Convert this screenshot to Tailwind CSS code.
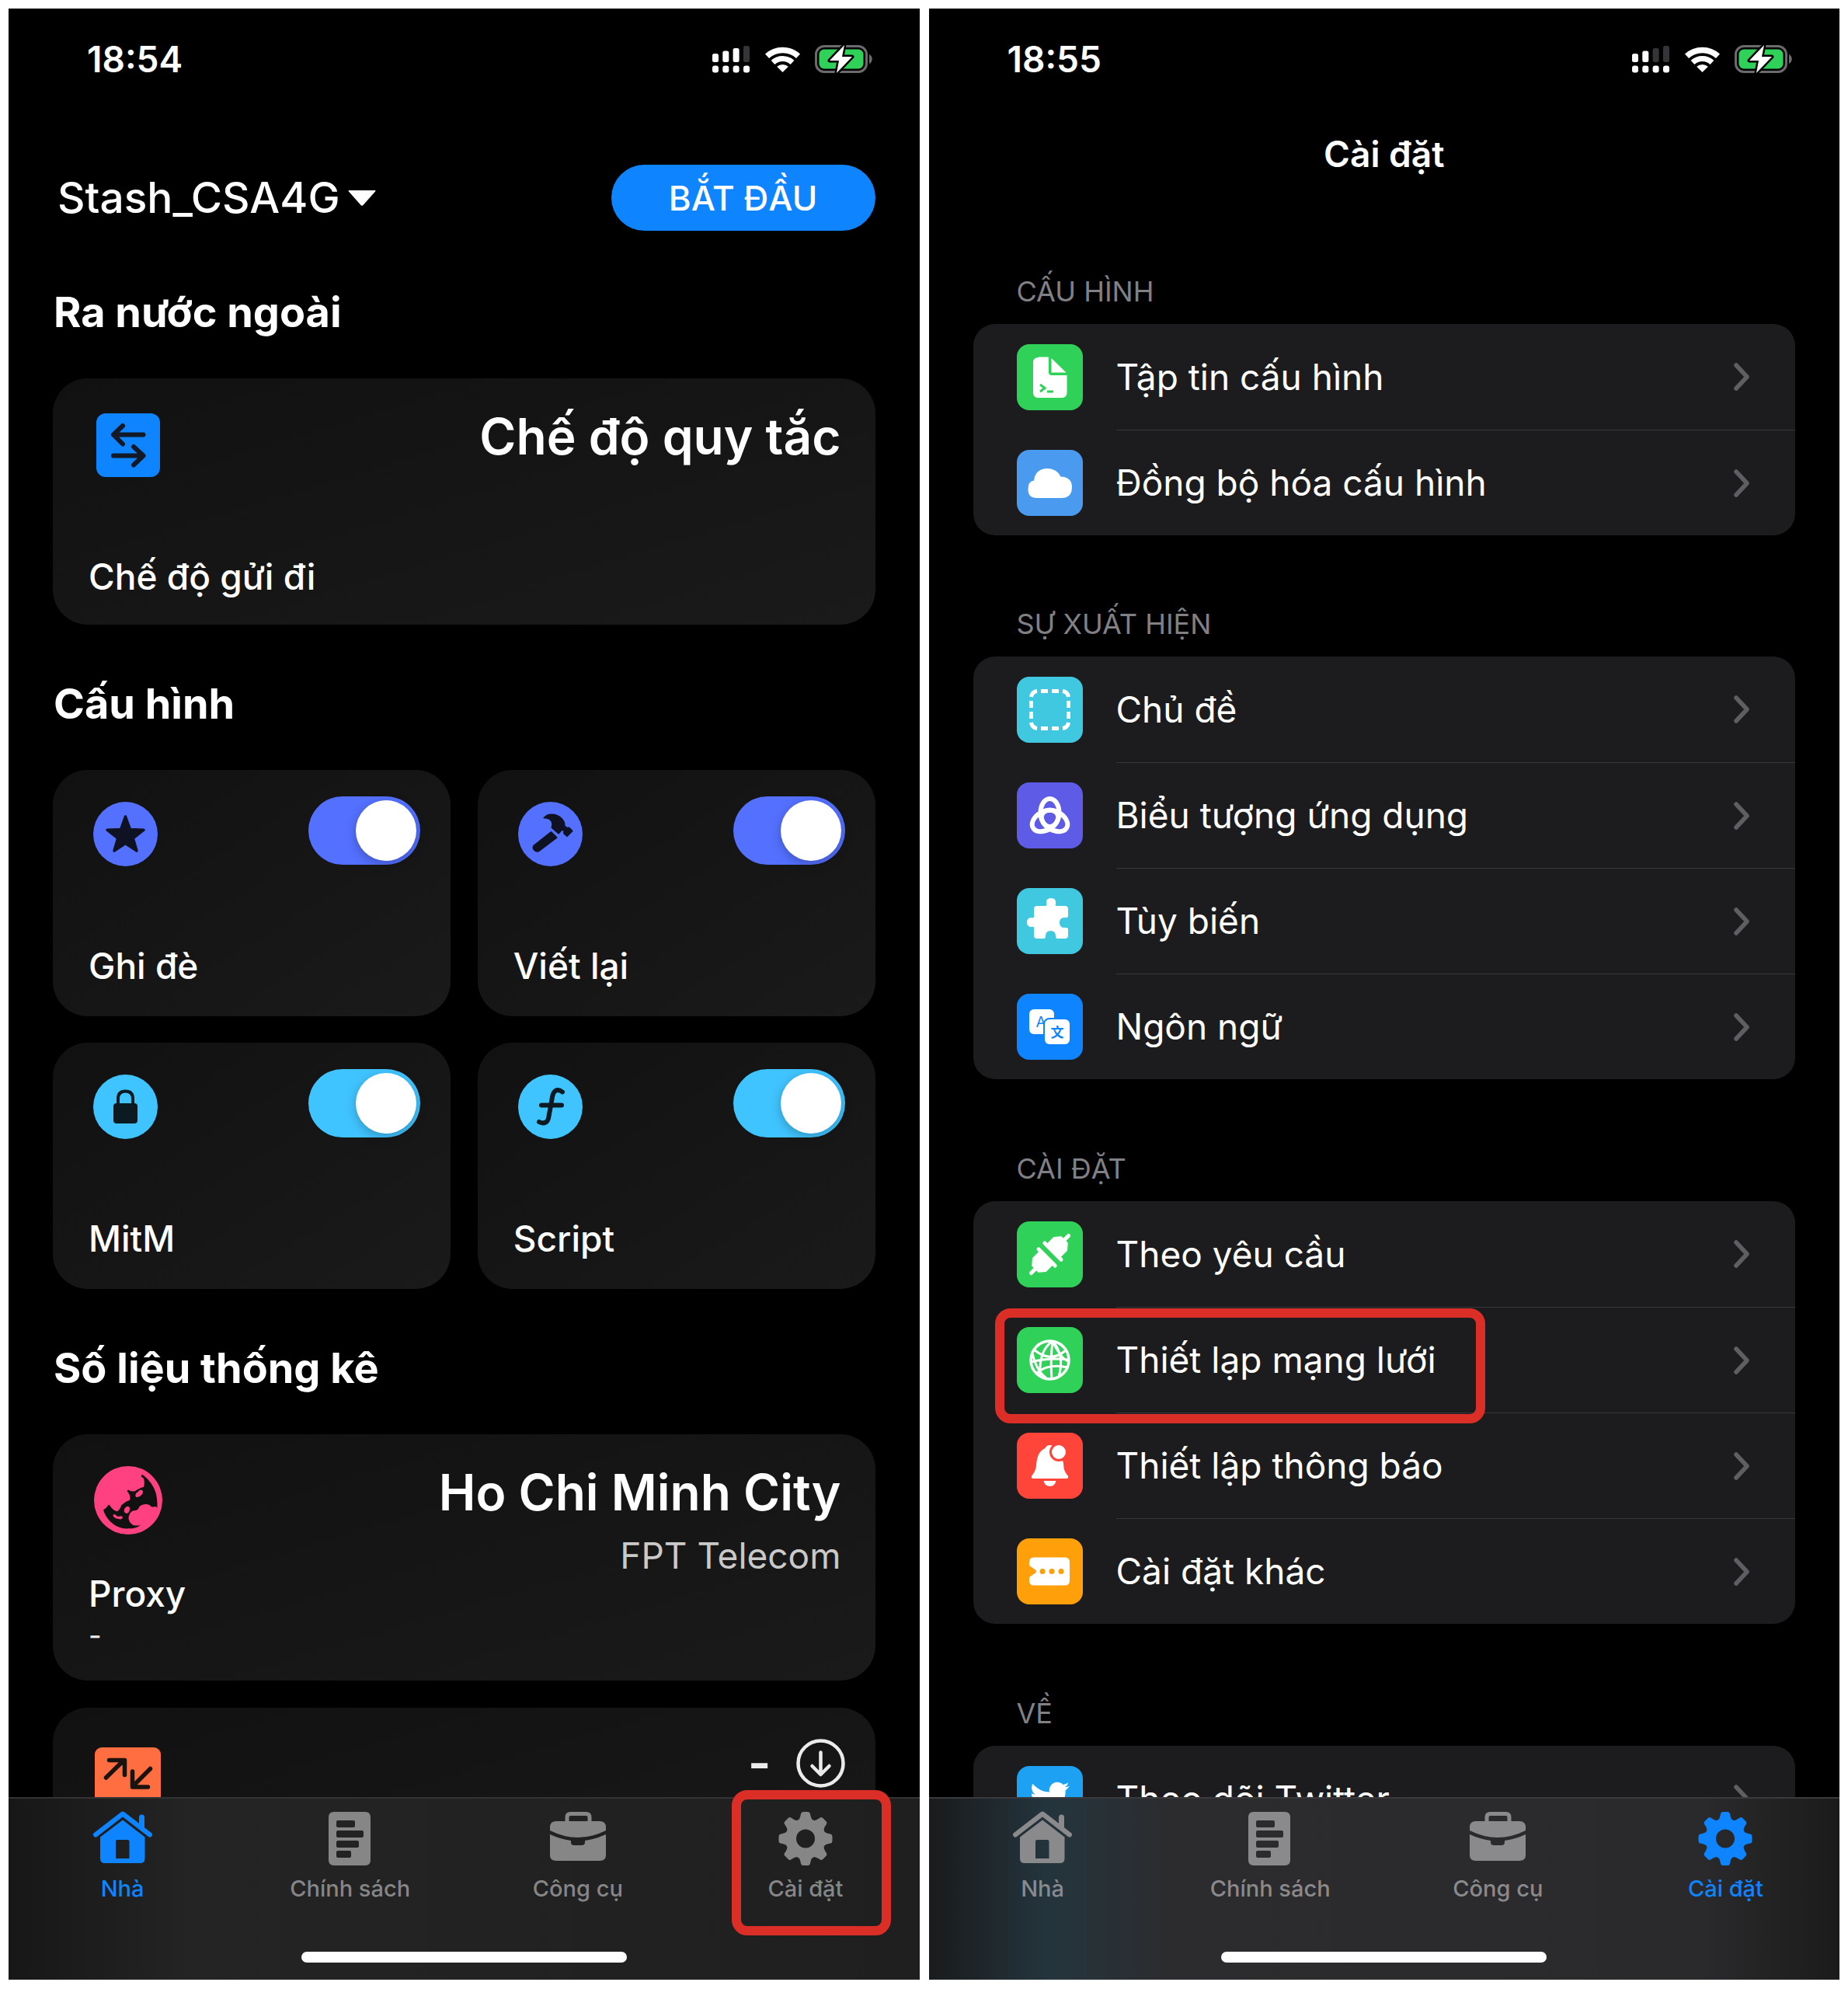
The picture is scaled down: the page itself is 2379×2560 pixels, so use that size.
<!DOCTYPE html>
<html lang="vi">
<head>
<meta charset="utf-8">
<meta name="viewport" content="width=device-width, initial-scale=1">
<title>Stash</title>
<script src="https://cdn.jsdelivr.net/npm/@tailwindcss/browser@4"></script>
</head>
<body class="bg-white font-['Inter',sans-serif] text-white">

<!-- Shared glyphs -->
<svg class="hidden" aria-hidden="true">
  <symbol id="wifi-battery" viewBox="0 0 138 36">
    <g fill="none" stroke="#fff">
      <path d="M2.5 14.2a29.5 29.5 0 0 1 40 0" stroke-width="7.5"/>
      <path d="M10 22.3a18.5 18.5 0 0 1 25 0" stroke-width="7"/>
    </g>
    <path d="M15.2 27.8a11 11 0 0 1 14.6 0L22.5 35z" fill="#fff"/>
    <rect x="65.5" y="1.5" width="65" height="33" rx="10.500" fill="none" stroke="#6b6b6d" stroke-width="3"/>
    <rect x="69.500" y="5.500" width="57" height="25" rx="6.500" fill="#30d158"/>
    <path d="M134 12c5 2 5 10 0 12z" fill="#6b6b6d"/>
    <path d="M102 0 83 20h12l-3 16 20-21H99z" fill="#fff" stroke="#000" stroke-width="5" stroke-linejoin="round" paint-order="stroke"/>
  </symbol>
  <symbol id="home" viewBox="0 0 84 72">
    <g fill="none" stroke="currentColor" stroke-width="6" stroke-linecap="round" stroke-linejoin="round">
      <path d="M7 31.500 42 4.500l35 27"/><path d="M66.500 9v12" stroke-width="7"/>
    </g>
    <path fill="currentColor" fill-rule="evenodd" d="M42 12.500 70.500 34.500V62q0 6-6 6H19q-6 0-6-6V34.500zM35 38q-2 0-2 2v22h17.500V40q0-2-2-2z"/>
  </symbol>
  <symbol id="policy" viewBox="0 0 84 72">
    <path fill="currentColor" fill-rule="evenodd" d="M21 2h40q7 0 7 7v55q0 7-7 7H21q-7 0-7-7V9q0-7 7-7zM26 13q-2 0-2 2v5q0 2 2 2h20q2 0 2-2v-5q0-2-2-2zM26 26q-2 0-2 2v5q0 2 2 2h31q2 0 2-2v-5q0-2-2-2zM26 39q-2 0-2 2v5q0 2 2 2h25q2 0 2-2v-5q0-2-2-2zM26 52q-2 0-2 2v5q0 2 2 2h15q2 0 2-2v-5q0-2-2-2z"/>
  </symbol>
  <symbol id="tools" viewBox="0 0 84 72">
    <path d="M28 15V9q0-4.500 4.500-4.500h20Q57 4.500 57 9v6" fill="none" stroke="currentColor" stroke-width="5"/>
    <path fill="currentColor" d="M14 14h56q8 0 8 8v4Q60 35 42 35T6 26v-4q0-8 8-8z"/>
    <path fill="currentColor" d="M6 31q13 6 27 8v2q0 4 4 4h10q4 0 4-4v-2q14-2 27-8v27q0 7-8 7H14q-8 0-8-7z"/>
  </symbol>
  <symbol id="gear" viewBox="0 0 84 72">
    <defs><path id="tooth" d="M-11-22Q-7-25-6-32q.5-2.500 3-2.500h6q2.500 0 3 2.500 1 7 5 10z"/></defs>
    <g transform="translate(42 36.500)" fill="currentColor">
      <circle r="19" fill="none" stroke="currentColor" stroke-width="14"/>
      <use href="#tooth"/><use href="#tooth" transform="rotate(45)"/><use href="#tooth" transform="rotate(90)"/><use href="#tooth" transform="rotate(135)"/><use href="#tooth" transform="rotate(180)"/><use href="#tooth" transform="rotate(225)"/><use href="#tooth" transform="rotate(270)"/><use href="#tooth" transform="rotate(315)"/>
    </g>
  </symbol>
  <symbol id="chevron" viewBox="0 0 20 36">
    <path d="M3 3l14 15L3 33" fill="none" stroke="#5f5f63" stroke-width="5.500" stroke-linecap="round" stroke-linejoin="round"/>
  </symbol>
</svg>

<div class="grid h-screen grid-cols-2 gap-3 px-[11px] pt-[11px] pb-3">

  <!-- Home screen -->
  <section class="flex min-h-0 flex-col bg-black">
    <main class="min-h-0 flex-1 overflow-hidden">
      <div class="flex h-[130px] items-center justify-between pr-[61px] pl-[101px]">
        <time class="text-[46px] leading-none font-semibold">18:54</time>
        <div class="flex items-center gap-5">
          <svg class="h-9 w-12" viewBox="0 0 48 36" fill="#fff" role="img" aria-label="Sóng">
            <rect y="11" width="8" height="11" rx="2.500"/><rect x="13.300" y="7.500" width="8" height="14.500" rx="2.500"/><rect x="26.600" y="4" width="8" height="18" rx="2.500"/><rect x="40" y="1" width="8" height="21" rx="2.500" fill="#353537"/>
            <rect y="26.500" width="8" height="9" rx="3"/><rect x="13.300" y="26.500" width="8" height="9" rx="3"/><rect x="26.600" y="26.500" width="8" height="9" rx="3"/><rect x="40" y="26.500" width="8" height="9" rx="3"/>
          </svg>
          <svg class="h-9 w-[138px]" role="img" aria-label="Wi-Fi, đang sạc pin"><use href="#wifi-battery"/></svg>
        </div>
      </div>

      <div class="px-[57px]">
        <header class="mt-[71px] mb-[73px] flex h-[85px] items-center justify-between">
          <button class="flex items-center gap-[10px] pl-[6px] text-[55px] font-medium">
            Stash_CSA4G
            <svg class="h-5 w-9" viewBox="0 0 36 20" fill="#fff" aria-hidden="true"><path d="M1 0h34q1 0 0 1.500L19.500 19q-1.500 1.500-3 0L1 1.500Q0 0 1 0z"/></svg>
          </button>
          <button class="h-full w-[340px] rounded-full bg-[#0f84ff] text-[44px] font-medium">BẮT ĐẦU</button>
        </header>

        <h2 class="pl-px text-[54px] leading-16 font-bold">Ra nước ngoài</h2>
        <article class="mt-[53px] flex h-[317px] flex-col justify-between rounded-[45px] bg-linear-to-br from-[#111111] to-[#1a1a1a] pt-[35px] pr-11 pb-[34px] pl-[46px]">
          <div class="flex items-start justify-between pl-[10px]">
            <svg class="mt-[10px] size-[82px]" viewBox="0 0 82 82" aria-hidden="true">
              <rect width="82" height="82" rx="12" fill="#0f84ff"/>
              <path d="M60.500 27.500H22M34 16 22 27.500 34 39.500M22 54.500h38M48 43l12.500 11.500L48 66.500" fill="none" stroke="#111a26" stroke-width="6" stroke-linecap="round" stroke-linejoin="round"/>
            </svg>
            <p class="text-[64px] leading-20 font-semibold">Chế độ quy tắc</p>
          </div>
          <h3 class="text-[46px] leading-14 font-medium">Chế độ gửi đi</h3>
        </article>

        <h2 class="mt-[70px] pl-px text-[54px] leading-16 font-bold">Cấu hình</h2>
        <div class="mt-[53px] grid grid-cols-2 gap-x-[35px] gap-y-[34px]">
          <label class="flex h-[317px] flex-col justify-between rounded-[45px] bg-linear-to-br from-[#111111] to-[#1a1a1a] pt-[34px] pr-[39px] pb-[37px] pl-[46px]">
            <span class="flex items-start justify-between pl-[6px]">
              <svg class="mt-[7px] size-[83px]" viewBox="0 0 83 83" aria-hidden="true">
                <circle cx="41.500" cy="41.500" r="41.500" fill="#5470ff"/>
                <path d="M41.500 19 47.500 35.500 65 36.200 51.300 47 56 63 41.500 53.500 27 63 31.700 47 18 36.200 35.500 35.500z" fill="#0f1222" stroke="#0f1222" stroke-width="3.500" stroke-linejoin="round"/>
              </svg>
              <input type="checkbox" checked class="block h-[88px] w-36 appearance-none rounded-full bg-[#5470ff] p-[5px] before:ml-auto before:block before:size-[78px] before:rounded-full before:bg-white before:shadow-[0_4px_14px_rgba(0,0,0,0.25)]">
            </span>
            <span class="text-[46px] leading-14 font-medium">Ghi đè</span>
          </label>
          <label class="flex h-[317px] flex-col justify-between rounded-[45px] bg-linear-to-br from-[#111111] to-[#1a1a1a] pt-[34px] pr-[39px] pb-[37px] pl-[46px]">
            <span class="flex items-start justify-between pl-[6px]">
              <svg class="mt-[7px] size-[83px]" viewBox="0 0 83 83" aria-hidden="true">
                <circle cx="41.500" cy="41.500" r="41.500" fill="#5470ff"/>
                <g fill="#0f1222" stroke="#0f1222" stroke-linejoin="round">
                  <path d="M42.500 39 49.500 46 27 63Q24 65 21 62 18 59 21 56z" stroke-width="2"/>
                  <path d="M34.500 20Q37 16.500 43 16.500q8 0 13 5.500 4 4 3.500 9l3.500 3 2.500-.5 4 4-6.500 6.500-4-3.500.5-3-3-2-4.500 5-8.500-7.500q2-5-1-9-3-4-9-3.500z" stroke-width="2"/>
                </g>
              </svg>
              <input type="checkbox" checked class="block h-[88px] w-36 appearance-none rounded-full bg-[#5470ff] p-[5px] before:ml-auto before:block before:size-[78px] before:rounded-full before:bg-white before:shadow-[0_4px_14px_rgba(0,0,0,0.25)]">
            </span>
            <span class="text-[46px] leading-14 font-medium">Viết lại</span>
          </label>
          <label class="flex h-[317px] flex-col justify-between rounded-[45px] bg-linear-to-br from-[#111111] to-[#1a1a1a] pt-[34px] pr-[39px] pb-[37px] pl-[46px]">
            <span class="flex items-start justify-between pl-[6px]">
              <svg class="mt-[7px] size-[83px]" viewBox="0 0 83 83" aria-hidden="true">
                <circle cx="41.500" cy="41.500" r="41.500" fill="#40c4ff"/>
                <rect x="26" y="37" width="31" height="26" rx="4" fill="#0c1a22"/>
                <path d="M32 39v-8q0-9.500 9.500-9.500T51 31v8" fill="none" stroke="#0c1a22" stroke-width="4"/>
              </svg>
              <input type="checkbox" checked class="block h-[88px] w-36 appearance-none rounded-full bg-[#40c4ff] p-[5px] before:ml-auto before:block before:size-[78px] before:rounded-full before:bg-white before:shadow-[0_4px_14px_rgba(0,0,0,0.25)]">
            </span>
            <span class="text-[46px] leading-14 font-medium">MitM</span>
          </label>
          <label class="flex h-[317px] flex-col justify-between rounded-[45px] bg-linear-to-br from-[#111111] to-[#1a1a1a] pt-[34px] pr-[39px] pb-[37px] pl-[46px]">
            <span class="flex items-start justify-between pl-[6px]">
              <svg class="mt-[7px] size-[83px]" viewBox="0 0 83 83" aria-hidden="true">
                <circle cx="41.500" cy="41.500" r="41.500" fill="#40c4ff"/>
                <path d="M57 22.500Q52 18.500 48 21q-3 2-4 8l-4.500 25q-1 6-4 7.500-4 2-8.500-.5M30 39.500h26" fill="none" stroke="#0c1a22" stroke-width="6" stroke-linecap="round"/>
              </svg>
              <input type="checkbox" checked class="block h-[88px] w-36 appearance-none rounded-full bg-[#40c4ff] p-[5px] before:ml-auto before:block before:size-[78px] before:rounded-full before:bg-white before:shadow-[0_4px_14px_rgba(0,0,0,0.25)]">
            </span>
            <span class="text-[46px] leading-14 font-medium">Script</span>
          </label>
        </div>

        <h2 class="mt-[70px] pl-px text-[54px] leading-16 font-bold">Số liệu thống kê</h2>
        <article class="mt-[53px] flex h-[317px] justify-between rounded-[45px] bg-linear-to-br from-[#111111] to-[#1a1a1a] pt-[35px] pr-11 pb-8 pl-[46px]">
          <div class="flex flex-col justify-between">
            <svg class="mt-[6px] ml-[7px] size-[88px]" viewBox="33 33 264 264" aria-hidden="true">
              <circle cx="165" cy="165" r="132" fill="#ff4081"/>
              <path d="M216 68q6-4 12 4 30 24 43 62 8 28 6 60-6-8-16-3-10-2-15-9-22-6-38 8-4 12-14 14-18 0-24 16-6 14-1 24 3 10 14 16 16 5 30 0-14 14-48 14-38 2-68-26-22-22-28-46 12-6 20-20l4 2q14 22 30 24 10-6 16-24 18-16 32-20 6-16-10-34 0-6 8-4 6 6 22 4 20-14 34-16 6-20-2-36-10-4-7-10z" fill="#111"/>
              <path d="M196 137q8-4 12-10 10-6 14 2 2 8-6 16-8 10-20 8-6-6 0-16zM152 196q4-8 12-8 8 2 7 12-2 14-12 16-8-2-10-8 0-6 3-12zM108 220q6-3 12 4 6 6 14 2 10 0 10 6-2 8-12 6-14-2-22-8-6-6-2-10z" fill="#ff4081"/>
            </svg>
            <div>
              <h3 class="text-[46px] leading-14 font-medium">Proxy</h3>
              <p class="text-[36px] leading-[52px] font-medium text-[#e5e5e5]">-</p>
            </div>
          </div>
          <div class="text-right">
            <p class="text-[64px] leading-20 font-semibold">Ho Chi Minh City</p>
            <p class="mt-[13px] text-[46px] leading-14 text-[#c9c9c9]">FPT Telecom</p>
          </div>
        </article>

        <article class="mt-[35px] flex h-[317px] items-start justify-between rounded-[45px] bg-linear-to-br from-[#111111] to-[#1a1a1a] pt-[39px] pr-[39px] pl-[54px]">
          <svg class="mt-3 size-[85px]" viewBox="0 0 85 85" aria-hidden="true">
            <rect width="85" height="85" rx="9" fill="#ff6e40"/>
            <path d="M14.500 39 37 17M18.500 16.500H38.500V35.500M71.500 27.500 49 50M48.500 31v20H68.500" fill="none" stroke="#1c130f" stroke-width="5.500" stroke-linecap="round" stroke-linejoin="round"/>
          </svg>
          <div class="flex h-16 items-center gap-8 text-[#ebebeb]">
            <span class="text-[64px] leading-none font-semibold">-</span>
            <svg class="size-[63px]" viewBox="0 0 63 63" fill="none" stroke="currentColor" stroke-width="4.500" stroke-linecap="round" stroke-linejoin="round" aria-hidden="true"><circle cx="31.500" cy="31.500" r="29"/><path d="M31.500 17.500v28M20.500 35l11 11 11-11"/></svg>
          </div>
        </article>
      </div>
    </main>

    <nav class="flex h-[235px] shrink-0 flex-col justify-between border-t-2 border-[#333335] bg-linear-to-r from-[#171717] via-[#242424] via-20% to-[#1f1f1f] pt-[15px] pb-[22px]">
      <div class="grid grid-cols-4 text-center text-[29px] leading-9 font-medium text-[#868686]">
        <a href="#home" class="flex flex-col items-center gap-[11px] text-[#0f84ff]"><svg class="h-[72px] w-[84px]" aria-hidden="true"><use href="#home"/></svg>Nhà</a>
        <a href="#policy" class="flex flex-col items-center gap-[11px]"><svg class="h-[72px] w-[84px]" aria-hidden="true"><use href="#policy"/></svg>Chính sách</a>
        <a href="#tools" class="flex flex-col items-center gap-[11px]"><svg class="h-[72px] w-[84px]" aria-hidden="true"><use href="#tools"/></svg>Công cụ</a>
        <a href="#gear" class="relative flex flex-col items-center gap-[11px]"><svg class="h-[72px] w-[84px]" aria-hidden="true"><use href="#gear"/></svg>Cài đặt
          <span class="absolute -top-[26px] left-[52px] h-[187px] w-[205px] rounded-[20px] border-12 border-[#da2e27]"></span>
        </a>
      </div>
      <div class="mx-auto h-[14px] w-[419px] rounded-full bg-white"></div>
    </nav>
  </section>

  <!-- Settings screen -->
  <section class="flex min-h-0 flex-col bg-black">
    <main class="min-h-0 flex-1 overflow-hidden">
      <div class="flex h-[130px] items-center justify-between pr-[61px] pl-[101px]">
        <time class="text-[46px] leading-none font-semibold">18:55</time>
        <div class="flex items-center gap-5">
          <svg class="h-9 w-12" viewBox="0 0 48 36" fill="#fff" role="img" aria-label="Sóng">
            <rect y="11" width="8" height="11" rx="2.500"/><rect x="13.300" y="7.500" width="8" height="14.500" rx="2.500"/><rect x="26.600" y="4" width="8" height="18" rx="2.500" fill="#353537"/><rect x="40" y="1" width="8" height="21" rx="2.500" fill="#353537"/>
            <rect y="26.500" width="8" height="9" rx="3"/><rect x="13.300" y="26.500" width="8" height="9" rx="3"/><rect x="26.600" y="26.500" width="8" height="9" rx="3"/><rect x="40" y="26.500" width="8" height="9" rx="3"/>
          </svg>
          <svg class="h-9 w-[138px]" role="img" aria-label="Wi-Fi, đang sạc pin"><use href="#wifi-battery"/></svg>
        </div>
      </div>

      <h1 class="mt-[25px] text-center text-[46px] leading-16 font-semibold">Cài đặt</h1>

      <div class="px-[57px]">
        <h2 class="mt-[123px] mb-5 pl-14 text-[36px] leading-11 text-[#808085]">CẤU HÌNH</h2>
        <ul class="rounded-[28px] bg-[#1c1c1e] pl-14 text-[46px]">
          <li><a href="#files" class="flex h-[136px] items-center gap-[43px]">
            <svg class="size-[85px] shrink-0" viewBox="0 0 85 85" aria-hidden="true">
              <rect width="85" height="85" rx="16" fill="#30d158"/>
              <path d="M28 16.500H41V36q0 4 4 4H64.500V62q0 7-7 7H28q-7 0-7-7V23.500q0-6.500 7-6.500z" fill="#fff"/>
              <path d="M44.500 18 63.500 36.500H44.500z" fill="#fff"/>
              <path d="M30 52l6 4.500-6 4.500M39 61h8" fill="none" stroke="#30d158" stroke-width="3"/>
            </svg>
            <span class="flex h-full flex-1 items-center justify-between pr-[59px]">Tập tin cấu hình<svg class="h-9 w-5" aria-hidden="true"><use href="#chevron"/></svg></span></a></li>
          <li><a href="#sync" class="flex h-[136px] items-center gap-[43px]">
            <svg class="size-[85px] shrink-0" viewBox="0 0 85 85" aria-hidden="true">
              <rect width="85" height="85" rx="16" fill="#4a9bef"/>
              <path d="M26 62q-11.500 0-11.500-11T22 39.500Q24 24 39.500 24q12 0 17 10.500Q71 35 71 48q0 14-14 14z" fill="#fff"/>
            </svg>
            <span class="flex h-full flex-1 items-center justify-between border-t border-[#38383b] pr-[59px]">Đồng bộ hóa cấu hình<svg class="h-9 w-5" aria-hidden="true"><use href="#chevron"/></svg></span></a></li>
        </ul>

        <h2 class="mt-[92px] mb-5 pl-14 text-[36px] leading-11 text-[#808085]">SỰ XUẤT HIỆN</h2>
        <ul class="rounded-[28px] bg-[#1c1c1e] pl-14 text-[46px]">
          <li><a href="#theme" class="flex h-[136px] items-center gap-[43px]">
            <svg class="size-[85px] shrink-0" viewBox="0 0 85 85" aria-hidden="true">
              <rect width="85" height="85" rx="16" fill="#40c8e0"/>
              <path d="M31 18.500h9M45 18.500h9M31 66.500h9M45 66.500h9M18.500 31v9M18.500 45v9M66.500 31v9M66.500 45v9M18.500 26q1-6.500 7.500-7.500M59 18.500q6.500 1 7.500 7.500M18.500 59q1 6.500 7.500 7.500M59 66.500q6.500-1 7.500-7.500" fill="none" stroke="#fff" stroke-width="5"/>
            </svg>
            <span class="flex h-full flex-1 items-center justify-between pr-[59px]">Chủ đề<svg class="h-9 w-5" aria-hidden="true"><use href="#chevron"/></svg></span></a></li>
          <li><a href="#icon" class="flex h-[136px] items-center gap-[43px]">
            <svg class="size-[85px] shrink-0" viewBox="0 0 85 85" aria-hidden="true">
              <rect width="85" height="85" rx="16" fill="#5e5ce6"/>
              <g fill="none" stroke="#fff" stroke-width="6"><ellipse cx="42.500" cy="39" rx="12" ry="18"/><ellipse cx="42.500" cy="39" rx="12" ry="18" transform="rotate(120 42.500 46)"/><ellipse cx="42.500" cy="39" rx="12" ry="18" transform="rotate(240 42.500 46)"/></g>
            </svg>
            <span class="flex h-full flex-1 items-center justify-between border-t border-[#38383b] pr-[59px]">Biểu tượng ứng dụng<svg class="h-9 w-5" aria-hidden="true"><use href="#chevron"/></svg></span></a></li>
          <li><a href="#custom" class="flex h-[136px] items-center gap-[43px]">
            <svg class="size-[85px] shrink-0" viewBox="0 0 85 85" aria-hidden="true">
              <rect width="85" height="85" rx="16" fill="#40c8e0"/>
              <path d="M26 23h11q2 0 1-3-1-7 6-7t6 7q-1 3 1 3h11q4 0 4 4v9q0 2-3 2-8-1-8 6.500T63 51q3 0 3 2v8q0 4-4 4H52q-2 0-2-3 0-7-6.500-7T37 62q0 3-2 3h-9q-4 0-4-4V51q0-2-3-1-6 0-6-6t6-6q3 1 3-1V27q0-4 4-4z" fill="#fff"/>
            </svg>
            <span class="flex h-full flex-1 items-center justify-between border-t border-[#38383b] pr-[59px]">Tùy biến<svg class="h-9 w-5" aria-hidden="true"><use href="#chevron"/></svg></span></a></li>
          <li><a href="#language" class="flex h-[136px] items-center gap-[43px]">
            <svg class="size-[85px] shrink-0" viewBox="0 0 85 85" aria-hidden="true">
              <rect width="85" height="85" rx="16" fill="#0f84ff"/>
              <rect x="16" y="20" width="32" height="32" rx="6" fill="#fff"/>
              <text x="31" y="43" text-anchor="middle" font-family="Inter, sans-serif" font-size="19" fill="#0f84ff">A</text>
              <rect x="36" y="33" width="32" height="32" rx="6" fill="#fff" stroke="#0f84ff" stroke-width="4" paint-order="stroke"/>
              <text x="52" y="55.500" text-anchor="middle" font-family="'Noto Sans CJK SC', sans-serif" font-size="17" font-weight="700" fill="#0f84ff">文</text>
            </svg>
            <span class="flex h-full flex-1 items-center justify-between border-t border-[#38383b] pr-[59px]">Ngôn ngữ<svg class="h-9 w-5" aria-hidden="true"><use href="#chevron"/></svg></span></a></li>
        </ul>

        <h2 class="mt-[93px] mb-5 pl-14 text-[36px] leading-11 text-[#808085]">CÀI ĐẶT</h2>
        <ul class="rounded-[28px] bg-[#1c1c1e] pl-14 text-[46px]">
          <li><a href="#demand" class="flex h-[136px] items-center gap-[43px]">
            <svg class="size-[85px] shrink-0" viewBox="0 0 85 85" aria-hidden="true">
              <rect width="85" height="85" rx="16" fill="#30d158"/>
              <g transform="translate(42.500 42.500) rotate(-45)" fill="#fff" stroke="#fff" stroke-linecap="round" stroke-linejoin="round">
                <path d="M-34 0h10M24 0h10M-5.500-15v30M5.500-15v30" stroke-width="5"/>
                <path d="M-7-11.500h-12l-7 6v11l7 6h12zM7-11.500h12l7 6v11l-7 6H7z" stroke-width="2"/>
              </g>
            </svg>
            <span class="flex h-full flex-1 items-center justify-between pr-[59px]">Theo yêu cầu<svg class="h-9 w-5" aria-hidden="true"><use href="#chevron"/></svg></span></a></li>
          <li class="relative"><a href="#network" class="flex h-[136px] items-center gap-[43px]">
            <svg class="size-[85px] shrink-0" viewBox="0 0 85 85" aria-hidden="true">
              <rect width="85" height="85" rx="16" fill="#30d158"/>
              <g fill="none" stroke="#fff" stroke-width="3"><circle cx="42.500" cy="42.500" r="24.500" stroke-width="3.500"/>
                <path d="M46 18Q28 30 30 63M46 18q-3 24-1 49M46 18q16 18 8 46M22 29q21 18 41 1M18 45q24-6 49-3M25 60q14-14 41-8M20 34q5 22 18 32M46 18q10 22 20 26"/></g>
            </svg>
            <span class="flex h-full flex-1 items-center justify-between border-t border-[#38383b] pr-[59px]">Thiết lạp mạng lưới<svg class="h-9 w-5" aria-hidden="true"><use href="#chevron"/></svg></span></a>
            <span class="absolute top-[2px] -left-7 h-[148px] w-[631px] rounded-[20px] border-12 border-[#da2e27]"></span></li>
          <li><a href="#notifications" class="flex h-[136px] items-center gap-[43px]">
            <svg class="size-[85px] shrink-0" viewBox="0 0 85 85" aria-hidden="true">
              <rect width="85" height="85" rx="16" fill="#ff453a"/>
              <path d="M42.500 16q5 0 6 5 7 4 10 13 2 5 2 11 1 6 5 10 2 4-2 4h-42q-4 0-2-4 5-6 5.500-13Q26 24 36.500 20q1.500-4 6-4z" fill="#fff"/>
              <circle cx="54" cy="25" r="10.500" fill="#fff" stroke="#ff453a" stroke-width="3"/>
              <path d="M34.500 62h16q-1.500 7-8 7t-8-7z" fill="#fff"/>
            </svg>
            <span class="flex h-full flex-1 items-center justify-between border-t border-[#38383b] pr-[59px]">Thiết lập thông báo<svg class="h-9 w-5" aria-hidden="true"><use href="#chevron"/></svg></span></a></li>
          <li><a href="#other" class="flex h-[136px] items-center gap-[43px]">
            <svg class="size-[85px] shrink-0" viewBox="0 0 85 85" aria-hidden="true">
              <rect width="85" height="85" rx="16" fill="#ff9f0a"/>
              <path d="M22 24.500h40q6 0 6 6v24q0 6-6 6H22q-6 0-6-6V50l8-5.500q2-2 0-4L16 35v-4.500q0-6 6-6z" fill="#fff"/>
              <g fill="#ff9f0a"><circle cx="33" cy="42.500" r="3.500"/><circle cx="45" cy="42.500" r="3.500"/><circle cx="57" cy="42.500" r="3.500"/></g>
            </svg>
            <span class="flex h-full flex-1 items-center justify-between border-t border-[#38383b] pr-[59px]">Cài đặt khác<svg class="h-9 w-5" aria-hidden="true"><use href="#chevron"/></svg></span></a></li>
        </ul>

        <h2 class="mt-[93px] mb-5 pl-14 text-[36px] leading-11 text-[#808085]">VỀ</h2>
        <ul class="rounded-[28px] bg-[#1c1c1e] pl-14 text-[46px]">
          <li><a href="#twitter" class="flex h-[136px] items-center gap-[43px]">
            <svg class="size-[85px] shrink-0" viewBox="0 0 85 85" aria-hidden="true">
              <rect width="85" height="85" rx="16" fill="#1da1f2"/>
              <path transform="translate(17 16) scale(2.120)" fill="#fff" d="M23.953 4.570a10 10 0 01-2.825.775 4.958 4.958 0 002.163-2.723c-.951.555-2.005.959-3.127 1.184a4.920 4.920 0 00-8.384 4.482C7.690 8.095 4.067 6.130 1.640 3.162a4.822 4.822 0 00-.666 2.475c0 1.710.870 3.213 2.188 4.096a4.904 4.904 0 01-2.228-.616v.060a4.923 4.923 0 003.946 4.827 4.996 4.996 0 01-2.212.085 4.936 4.936 0 004.604 3.417 9.867 9.867 0 01-6.102 2.105c-.390 0-.779-.023-1.170-.067a13.995 13.995 0 007.557 2.209c9.053 0 13.998-7.496 13.998-13.985 0-.210 0-.420-.015-.630A9.935 9.935 0 0024 4.590z"/>
            </svg>
            <span class="flex h-full flex-1 items-center justify-between pr-[59px]">Theo dõi Twitter<svg class="h-9 w-5" aria-hidden="true"><use href="#chevron"/></svg></span></a></li>
        </ul>
      </div>
    </main>

    <nav class="flex h-[235px] shrink-0 flex-col justify-between border-t-2 border-[#3a3a3c] bg-[linear-gradient(90deg,#1a1b1c_0%,#24343d_13%,#26333a_16%,#2c2c2e_26%,#2a2a2c_85%,#1b1b1b_100%)] pt-[15px] pb-[22px]">
      <div class="grid grid-cols-4 text-center text-[29px] leading-9 font-medium text-[#8a8a8c]">
        <a href="#home" class="flex flex-col items-center gap-[11px]"><svg class="h-[72px] w-[84px]" aria-hidden="true"><use href="#home"/></svg>Nhà</a>
        <a href="#policy" class="flex flex-col items-center gap-[11px]"><svg class="h-[72px] w-[84px]" aria-hidden="true"><use href="#policy"/></svg>Chính sách</a>
        <a href="#tools" class="flex flex-col items-center gap-[11px]"><svg class="h-[72px] w-[84px]" aria-hidden="true"><use href="#tools"/></svg>Công cụ</a>
        <a href="#gear" class="flex flex-col items-center gap-[11px] text-[#0f84ff]"><svg class="h-[72px] w-[84px]" aria-hidden="true"><use href="#gear"/></svg>Cài đặt</a>
      </div>
      <div class="mx-auto h-[14px] w-[419px] rounded-full bg-white"></div>
    </nav>
  </section>
</div>
</body>
</html>
